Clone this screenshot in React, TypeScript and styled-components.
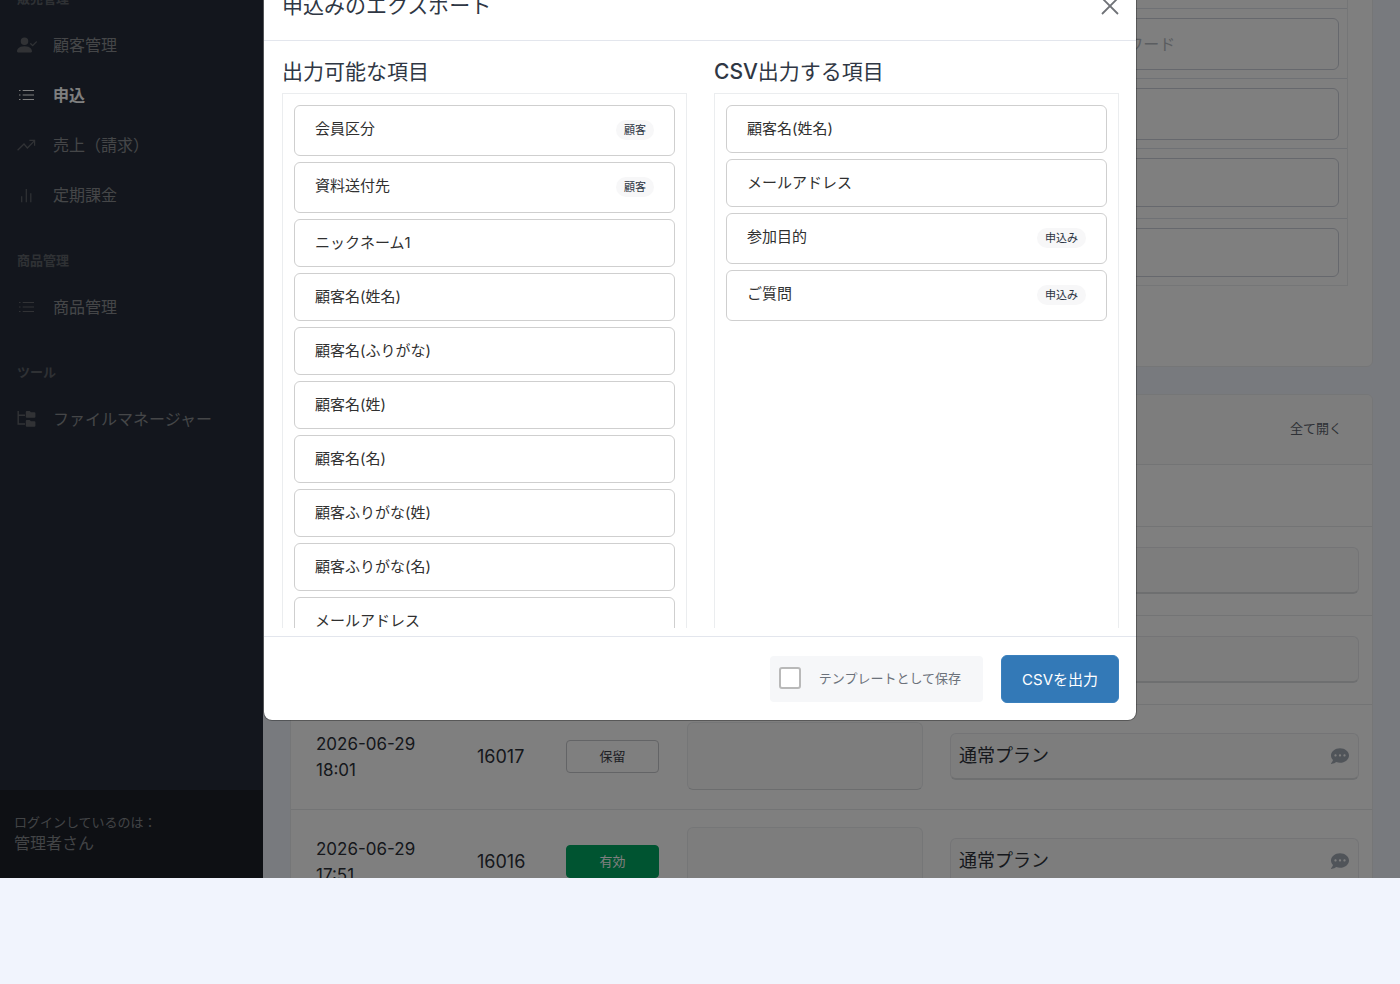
import React from "react";
import styled, { createGlobalStyle, css } from "styled-components";
import { FaCommentDots } from "react-icons/fa";
import { BsPersonCheckFill } from "react-icons/bs";

const GlobalStyle = createGlobalStyle`
  *, *::before, *::after { box-sizing: border-box; }
  body {
    margin: 0;
    background: #f1f4fd;
    color: #2c3038;
    font-family: Inter, "Noto Sans CJK JP", sans-serif;
    font-size: 15px;
    line-height: 22px;
  }
  button, input { font-family: inherit; }
  h2, h3, p, ul { margin: 0; padding: 0; }
  ul { list-style: none; }
`;

const Frame = styled.div`
  position: relative;
  display: flex;
  height: calc(100vh - 106px);
  overflow: hidden;
`;

/* ---------- Sidebar ---------- */

const Sidebar = styled.aside`
  flex: 0 0 263px;
  display: flex;
  flex-direction: column;
  justify-content: space-between;
  background: #262d3b;
`;

const Nav = styled.nav`
  margin-top: -42px;
`;

const NavLabel = styled.h3`
  padding: 31px 17px 13px;
  font-size: 13px;
  line-height: 18px;
  font-weight: 700;
  color: #5e6269;
`;

const NavLink = styled.a<{ $active?: boolean }>`
  display: flex;
  align-items: center;
  gap: 16px;
  height: 50px;
  padding: 0 17px;
  font-size: 16px;
  line-height: 24px;
  text-decoration: none;
  color: #8b8d91;
  ${(p) => p.$active && css`color: #fff; font-weight: 700;`}

  svg {
    flex: none;
    color: ${(p) => (p.$active ? "#fff" : "#62656b")};
  }
`;

const LoginBox = styled.div`
  padding: 22px 14px 23px;
  background: #1c2028;
  color: #85888d;
  font-size: 16px;
  line-height: 23px;

  small {
    display: block;
    font-size: 13px;
    line-height: 20px;
  }
`;

/* ---------- Page behind the dialog ---------- */

const Main = styled.main`
  flex: 1;
  min-width: 0;
  display: flex;
  flex-direction: column;
  gap: 27px;
  padding: 0 27px;
`;

const Card = styled.section`
  flex: none;
  background: #fff;
  border: 1px solid #ebecef;
  border-radius: 6px;
`;

const SearchCard = styled(Card)`
  margin-top: -87px;
  padding: 24px 24px 80px;
`;

const SearchTable = styled.table`
  width: 100%;
  table-layout: fixed;
  border: 1px solid #ebecef;
  border-collapse: separate;
  border-spacing: 0;

  td {
    height: 70px;
    padding: 9px 8px 8px;
    vertical-align: top;
    border-bottom: 1px solid #dfe2ea;
  }
  tr:last-child td {
    height: 66px;
    border-bottom: 0;
  }
`;

const LabelCol = styled.col`
  width: 72%;
`;

const SearchInput = styled.input<{ $tall?: boolean }>`
  display: block;
  width: 100%;
  height: ${(p) => (p.$tall ? 52 : 49)}px;
  padding: 0 12px;
  border: 1px solid #cdd1da;
  border-radius: 6px;
  background: #fff;
  font-size: 16px;

  &::placeholder { color: #b6bac1; opacity: 1; }
`;

const CardHeader = styled.header`
  display: flex;
  justify-content: flex-end;
  align-items: center;
  height: 70px;
  padding: 0 30px 3px;
  background: #fafafa;
  border-bottom: 1px solid #e6e8ea;
  border-radius: 6px 6px 0 0;
`;

const TextButton = styled.button`
  padding: 0;
  border: 0;
  background: none;
  color: #5c626c;
  font-size: 13px;
  line-height: 20px;
`;

const OrderTable = styled.table`
  width: 100%;
  table-layout: fixed;
  border-collapse: separate;
  border-spacing: 0;
  font-size: 18px;
  line-height: 26px;

  th, td {
    padding: 0 14px;
    border-bottom: 1px solid #e6e8ea;
    text-align: left;
    vertical-align: middle;
  }
  th { height: 62px; }
  td:first-child {
    padding-left: 25px;
    font-size: 17px;
  }
  td:last-child { padding: 0 13px; }
  td > * { margin-bottom: 2px; }
`;

const Col = styled.col<{ $w?: number }>`
  width: ${(p) => (p.$w ? `${p.$w}px` : "auto")};
`;

const OrderRow = styled.tr<{ $short?: boolean }>`
  td { height: ${(p) => (p.$short ? 89 : 105)}px; }
`;

const StatusButton = styled.button<{ $on?: boolean }>`
  display: block;
  width: 100%;
  height: 33px;
  padding: 0;
  border: 1px solid ${(p) => (p.$on ? "#00a862" : "#c6c8cc")};
  border-radius: 4px;
  background: ${(p) => (p.$on ? "#00a862" : "#fff")};
  color: ${(p) => (p.$on ? "#fff" : "#3c4048")};
  font-size: 13px;
  line-height: 20px;
`;

const MemoBox = styled.div`
  height: 68px;
  background: #fafafa;
  border: 1px solid #ebecef;
  border-bottom-color: #d8dadd;
  border-radius: 6px;
`;

const PlanBox = styled.div`
  display: flex;
  align-items: center;
  justify-content: space-between;
  height: 47px;
  padding: 0 9px 0 8px;
  background: #fafafa;
  border: 1px solid #e8e9ec;
  border-bottom: 2px solid #dcdee1;
  border-radius: 6px;

  svg { color: #a0a8b3; }
`;

/* ---------- Export dialog ---------- */

const Backdrop = styled.div`
  position: absolute;
  inset: 0;
  display: flex;
  justify-content: center;
  align-items: flex-start;
  background: rgba(0, 0, 0, 0.5);
`;

const Dialog = styled.section`
  display: flex;
  flex-direction: column;
  width: 100%;
  max-width: 874px;
  height: calc(100vh - 234px);
  margin-top: -29px;
  background: #fff;
  background-clip: padding-box;
  border: 1px solid rgba(0, 0, 0, 0.3);
  border-radius: 9px;
  color: #2f3744;
`;

const DialogHeader = styled.header`
  display: flex;
  align-items: center;
  justify-content: space-between;
  padding: 19px 17px 19px 18px;
  border-bottom: 1px solid #e3e6ed;
`;

const Heading = styled.h3`
  font-size: 21px;
  line-height: 30px;
  font-weight: 400;

  span { font-weight: 500; }
`;

const CloseButton = styled.button`
  display: flex;
  padding: 0;
  border: 0;
  background: none;
  color: #6f7277;
`;

const DialogBody = styled.div`
  flex: 1;
  min-height: 0;
  display: grid;
  grid-template-columns: 1fr 1fr;
  gap: 27px;
  padding: 16px 17px 8px 18px;
`;

const Column = styled.div`
  display: flex;
  flex-direction: column;
  gap: 6px;
  min-height: 0;
`;

const ItemList = styled.ul`
  flex: 1;
  min-height: 0;
  display: flex;
  flex-direction: column;
  gap: 6px;
  padding: 11px 11px 0;
  border: 1px solid #ebedef;
  border-bottom: 0;
  overflow: hidden;
`;

const Item = styled.li`
  flex: none;
  display: flex;
  align-items: flex-start;
  justify-content: space-between;
  padding: 12px 20px;
  border: 1px solid #cfcfcf;
  border-radius: 6px;
  color: #303030;
`;

const Badge = styled.span`
  margin: 2px 0 3px;
  padding: 0 8px;
  border-radius: 10px;
  background: #f7f7f8;
  color: #2b3442;
  font-size: 11px;
  line-height: 20px;
`;

const DialogFooter = styled.footer`
  display: flex;
  align-items: center;
  justify-content: flex-end;
  gap: 18px;
  padding: 18px 17px 17px;
  border-top: 1px solid #e3e6ed;
`;

const TemplateLabel = styled.label`
  display: flex;
  align-items: center;
  gap: 18px;
  height: 46px;
  padding: 0 22px 2px 9px;
  border-radius: 4px;
  background: #f6f7f9;
  color: #6c727b;
  font-size: 13px;
`;

const CheckBox = styled.input`
  appearance: none;
  width: 22px;
  height: 22px;
  margin: 0;
  border: 2px solid #b9b9b9;
  border-radius: 3px;
  background: #fff;
`;

const ExportButton = styled.button`
  height: 48px;
  padding: 0 20px 2px;
  border: 1px solid #3a80bd;
  border-radius: 6px;
  background: #3379b7;
  color: #fff;
  font-size: 15px;
`;

/* ---------- Icons ---------- */

const stroke = { fill: "none", stroke: "currentColor", strokeWidth: 1.2 };

const ListIcon = () => (
  <svg width="20" height="20" viewBox="0 0 20 20" {...stroke}>
    <path d="M5.7 5.5h11.3M5.7 10h11.3M5.7 14.5h11.3" />
    <path d="M2 5.5h1.5M2 10h1.5M2 14.5h1.5" />
  </svg>
);

const TrendIcon = () => (
  <svg width="20" height="20" viewBox="0 0 20 20" {...stroke}>
    <path d="M.6 15.2 7 9l3.4 4L17.6 5.6M12.4 5.4h5.2v5.4" />
  </svg>
);

const BarsIcon = () => (
  <svg width="20" height="20" viewBox="0 0 20 20" {...stroke}>
    <path d="M4.7 11.3v5.9M9.3 4v13.2M13.8 8.2v9" />
  </svg>
);

const FolderTreeIcon = () => (
  <svg width="20" height="20" viewBox="0 0 20 20">
    <path d="M1.2 2v13H8M1.2 6.2H8" fill="none" stroke="currentColor" strokeWidth="1.4" />
    <path
      d="M9.8 2h2.9l1.2 1.2h3.5q1 0 1 1v3.6q0 1-1 1H9.8q-1 0-1-1V3q0-1 1-1zM9.8 11h2.9l1.2 1.2h3.5q1 0 1 1v3.6q0 1-1 1H9.8q-1 0-1-1V12q0-1 1-1z"
      fill="currentColor"
    />
  </svg>
);

const CloseIcon = () => (
  <svg width="18" height="18" viewBox="0 0 18 18" {...stroke} strokeWidth="1.8">
    <path d="M1 1l16 16M17 1L1 17" />
  </svg>
);

/* ---------- Data ---------- */

type Field = { name: string; tag?: string };

const available: Field[] = [
  { name: "会員区分", tag: "顧客" },
  { name: "資料送付先", tag: "顧客" },
  { name: "ニックネーム1" },
  { name: "顧客名(姓名)" },
  { name: "顧客名(ふりがな)" },
  { name: "顧客名(姓)" },
  { name: "顧客名(名)" },
  { name: "顧客ふりがな(姓)" },
  { name: "顧客ふりがな(名)" },
  { name: "メールアドレス" },
];

const selected: Field[] = [
  { name: "顧客名(姓名)" },
  { name: "メールアドレス" },
  { name: "参加目的", tag: "申込み" },
  { name: "ご質問", tag: "申込み" },
];

const orders = [
  { date: "2026-06-29", time: "18:01", id: "16017", status: "保留", on: false },
  { date: "2026-06-29", time: "17:51", id: "16016", status: "有効", on: true },
];

const Fields = ({ items }: { items: Field[] }) => (
  <ItemList>
    {items.map((f) => (
      <Item key={f.name}>
        {f.name}
        {f.tag && <Badge>{f.tag}</Badge>}
      </Item>
    ))}
  </ItemList>
);

export default function App() {
  return (
    <>
      <GlobalStyle />
      <Frame>
        <Sidebar>
          <Nav>
            <NavLabel>販売管理</NavLabel>
            <NavLink href="#customers"><BsPersonCheckFill size={20} />顧客管理</NavLink>
            <NavLink href="#orders" $active><ListIcon />申込</NavLink>
            <NavLink href="#sales"><TrendIcon />売上（請求）</NavLink>
            <NavLink href="#billing"><BarsIcon />定期課金</NavLink>
            <NavLabel>商品管理</NavLabel>
            <NavLink href="#products"><ListIcon />商品管理</NavLink>
            <NavLabel>ツール</NavLabel>
            <NavLink href="#files"><FolderTreeIcon />ファイルマネージャー</NavLink>
          </Nav>
          <LoginBox>
            <small>ログインしているのは：</small>
            管理者さん
          </LoginBox>
        </Sidebar>

        <Main>
          <SearchCard>
            <SearchTable>
              <colgroup><LabelCol /><col /></colgroup>
              <tbody>
                <tr><td /><td /></tr>
                <tr><td /><td><SearchInput $tall placeholder="フリーワード" aria-label="フリーワード" /></td></tr>
                <tr><td /><td><SearchInput $tall aria-label="条件1" /></td></tr>
                <tr><td /><td><SearchInput aria-label="条件2" /></td></tr>
                <tr><td /><td><SearchInput aria-label="条件3" /></td></tr>
              </tbody>
            </SearchTable>
          </SearchCard>

          <Card>
            <CardHeader><TextButton type="button">全て開く</TextButton></CardHeader>
            <OrderTable>
              <colgroup><Col $w={172} /><Col $w={89} /><Col $w={121} /><Col $w={264} /><Col /></colgroup>
              <thead>
                <tr><th /><th /><th /><th /><th /></tr>
              </thead>
              <tbody>
                <OrderRow $short><td /><td /><td /><td /><td><PlanBox /></td></OrderRow>
                <OrderRow $short><td /><td /><td /><td /><td><PlanBox /></td></OrderRow>
                {orders.map((o) => (
                  <OrderRow key={o.id}>
                    <td>{o.date}<br />{o.time}</td>
                    <td>{o.id}</td>
                    <td><StatusButton type="button" $on={o.on}>{o.status}</StatusButton></td>
                    <td><MemoBox /></td>
                    <td><PlanBox>通常プラン<FaCommentDots size={18} /></PlanBox></td>
                  </OrderRow>
                ))}
              </tbody>
            </OrderTable>
          </Card>
        </Main>

        <Backdrop>
          <Dialog role="dialog" aria-modal="true" aria-labelledby="export-title">
            <DialogHeader>
              <Heading as="h2" id="export-title">申込みのエクスポート</Heading>
              <CloseButton type="button" aria-label="閉じる"><CloseIcon /></CloseButton>
            </DialogHeader>
            <DialogBody>
              <Column>
                <Heading>出力可能な項目</Heading>
                <Fields items={available} />
              </Column>
              <Column>
                <Heading><span>CSV</span>出力する項目</Heading>
                <Fields items={selected} />
              </Column>
            </DialogBody>
            <DialogFooter>
              <TemplateLabel>
                <CheckBox type="checkbox" />
                テンプレートとして保存
              </TemplateLabel>
              <ExportButton type="button">CSVを出力</ExportButton>
            </DialogFooter>
          </Dialog>
        </Backdrop>
      </Frame>
    </>
  );
}
